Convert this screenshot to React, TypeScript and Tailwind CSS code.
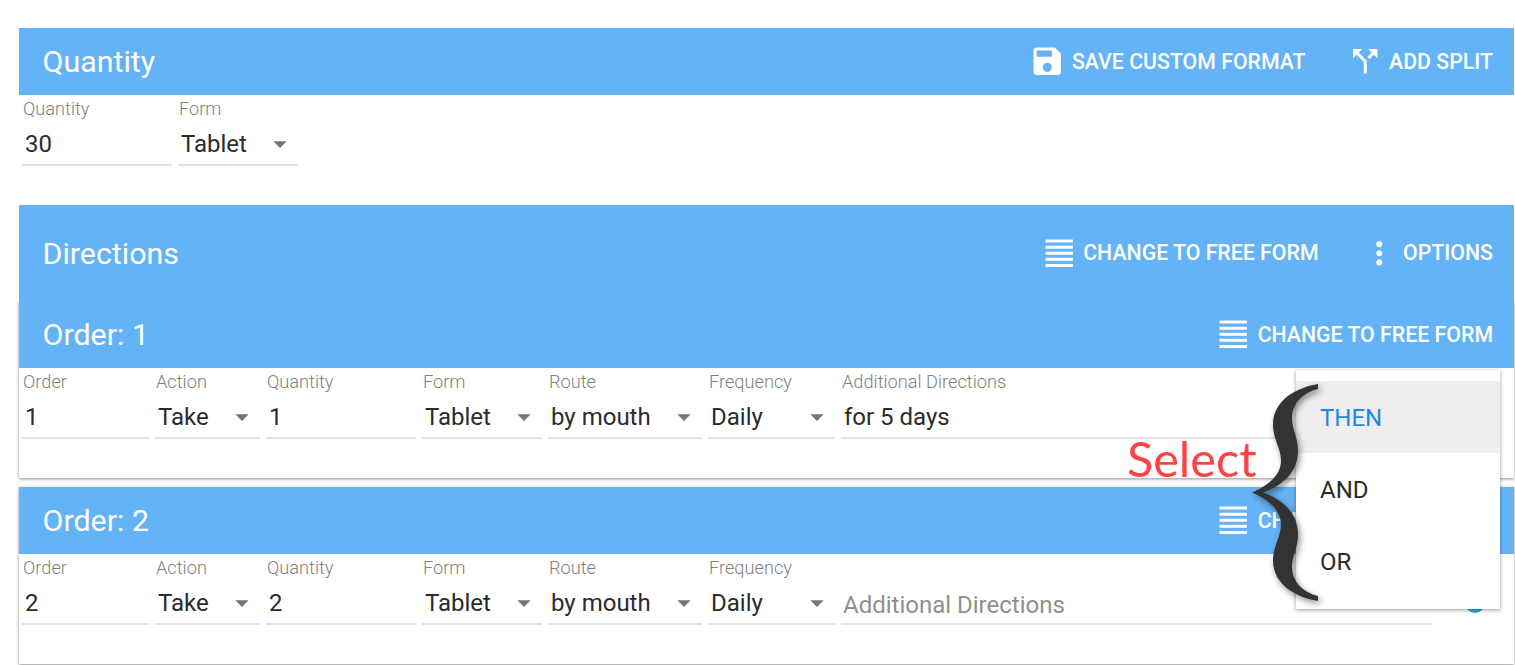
const ICONS = {
  save: 'M17 3H5c-1.11 0-2 .9-2 2v14c0 1.1.89 2 2 2h14c1.1 0 2-.9 2-2V7l-4-4zm-5 16c-1.66 0-3-1.34-3-3s1.34-3 3-3 3 1.34 3 3-1.34 3-3 3zm3-10H5V5h10v4z',
  split: 'M14 4l2.29 2.29-2.88 2.88 1.42 1.42 2.88-2.88L20 10V4zm-4 0H4v6l2.29-2.29 4.71 4.7V20h2v-8.41l-5.29-5.3z',
  justify: 'M3 21h18v-2H3v2zm0-4h18v-2H3v2zm0-4h18v-2H3v2zm0-4h18V7H3v2zm0-6v2h18V3H3z',
  more: 'M12 8c1.1 0 2-.9 2-2s-.9-2-2-2-2 .9-2 2 .9 2 2 2zm0 2c-1.1 0-2 .9-2 2s.9 2 2 2 2-.9 2-2-.9-2-2-2zm0 6c-1.1 0-2 .9-2 2s.9 2 2 2 2-.9 2-2-.9-2-2-2z',
};

function Icon({ d, className }: { d: string; className?: string }) {
  return (
    <svg viewBox="0 0 24 24" className={`shrink-0 ${className ?? ''}`} fill="currentColor" aria-hidden="true">
      <path d={d} />
    </svg>
  );
}

function HeaderButton({ icon, label }: { icon: string; label: string }) {
  return (
    <div className="flex items-center gap-[6px]">
      <Icon d={icon} className="w-[36.5px] h-[36.5px]" />
      <span className="text-[21.3px] font-medium leading-none">{label}</span>
    </div>
  );
}

function Header({ title, height, gap, className, children }: { title: string; height: string; gap?: string; className?: string; children: React.ReactNode }) {
  return (
    <div className={`flex items-center justify-between pl-[23.5px] pr-[21px] bg-[#64b3f6] text-white ${height} ${className ?? ''}`}>
      <h2 className="pt-[2px] text-[30.4px] leading-none font-normal">{title}</h2>
      <div className={`flex items-center ${gap ?? ''}`}>{children}</div>
    </div>
  );
}

function Field({ label, value, width, select, placeholder }: { label: string; value?: string; width: string; select?: boolean; placeholder?: string }) {
  return (
    <div className={`shrink-0 ${width}`}>
      <div className="h-[27px] pl-px pt-[3px] text-[18.2px] leading-[22px] text-[#808080] font-light">{label}</div>
      <div className="flex items-center justify-between h-[44px] border-b-2 border-[#e3e3e3] pt-[2px]">
        {placeholder ? (
          <span className="pl-[2px] pt-1 text-[24px] text-[#8f8f8f]">{placeholder}</span>
        ) : (
          <span className="pl-[3px] text-[24px] text-[#2b2b2b]">{value}</span>
        )}
        {select && <Icon d="M7 10l5 5 5-5z" className="w-8 h-8 text-[#757575] mr-[2px]" />}
      </div>
    </div>
  );
}

function OrderCard({ order, quantity, extra, placeholder }: { order: string; quantity: string; extra?: string; placeholder?: string }) {
  return (
    <div className="bg-white shadow-[0_1px_3px_rgba(0,0,0,0.45)]">
      <Header title={`Order: ${order}`} height="h-[67px]">
        <HeaderButton icon={ICONS.justify} label="CHANGE TO FREE FORM" />
      </Header>
      <div className="flex gap-[6px] pl-[3px] h-[110px]">
        <Field label="Order" value={order} width="w-[127px]" />
        <Field label="Action" value="Take" width="w-[105px]" select />
        <Field label="Quantity" value={quantity} width="w-[150px]" />
        <Field label="Form" value="Tablet" width="w-[120px]" select />
        <Field label="Route" value="by mouth" width="w-[154px]" select />
        <Field label="Frequency" value="Daily" width="w-[127px]" select />
        <Field label={placeholder ? '' : 'Additional Directions'} value={extra} placeholder={placeholder} width="w-[592px]" />
        <div className="w-[20px] h-[22px] rounded-full bg-[#29a9e6] mt-[37px] ml-[26px]" />
      </div>
    </div>
  );
}

export default function App() {
  return (
    <div className="relative h-[665px] overflow-hidden bg-white pt-7 pl-[19px] pr-px font-['Roboto',sans-serif]">
      <Header title="Quantity" height="h-[67px]" gap="gap-[41px]">
        <HeaderButton icon={ICONS.save} label="SAVE CUSTOM FORMAT" />
        <HeaderButton icon={ICONS.split} label="ADD SPLIT" />
      </Header>
      <div className="flex gap-[6px] pl-[3px] h-[110px]">
        <Field label="Quantity" value="30" width="w-[150px]" />
        <Field label="Form" value="Tablet" width="w-[120px]" select />
      </div>

      <Header title="Directions" height="h-[96px]" gap="gap-[42px]" className="relative z-10">
        <HeaderButton icon={ICONS.justify} label="CHANGE TO FREE FORM" />
        <HeaderButton icon={ICONS.more} label="OPTIONS" />
      </Header>
      <div className="flex flex-col gap-[9px]">
        <OrderCard order="1" quantity="1" extra="for 5 days" />
        <OrderCard order="2" quantity="2" placeholder="Additional Directions" />
      </div>

      {/* Open menu */}
      <div className="absolute z-20 left-[1296px] top-[370px] w-[204px] pt-[11px] pb-3 bg-white shadow-[0_1px_4px_rgba(0,0,0,0.4)] text-[24px] text-[#2b2b2b]">
        <div className="flex items-center h-[72px] pl-6 pt-[2px] bg-[#eeeeee] text-[#1e88e5]">THEN</div>
        <div className="flex items-center h-[72px] pl-6 pt-[2px]">AND</div>
        <div className="flex items-center h-[72px] pl-6 pt-[2px]">OR</div>
      </div>

      {/* Annotation drawn over the screenshot */}
      <svg viewBox="0 0 66 217" className="absolute z-20 left-[1252px] top-[384px] w-[66px] h-[217px] drop-shadow-[2px_3px_3px_rgba(0,0,0,0.45)]" aria-hidden="true">
        <path
          fill="#333333"
          d="M66 0C48 3 21 14 21 41C21 55 29 64 29 77C29 92 14 103 0 108.5C14 114 29 125 29 140C29 153 21 162 21 176C21 203 48 214 66 217L66 212C50 208 40 197 40 183C40 171 46 164 46 150C46 125 24 113 11 108.5C24 104 46 92 46 67C46 53 40 46 40 34C40 20 50 9 66 5Z"
        />
      </svg>
      <div className="absolute z-20 left-[1127px] top-[430px] font-['Lato',sans-serif] text-[48.6px] leading-[56px] text-[#ff4345]">Select</div>
    </div>
  );
}
